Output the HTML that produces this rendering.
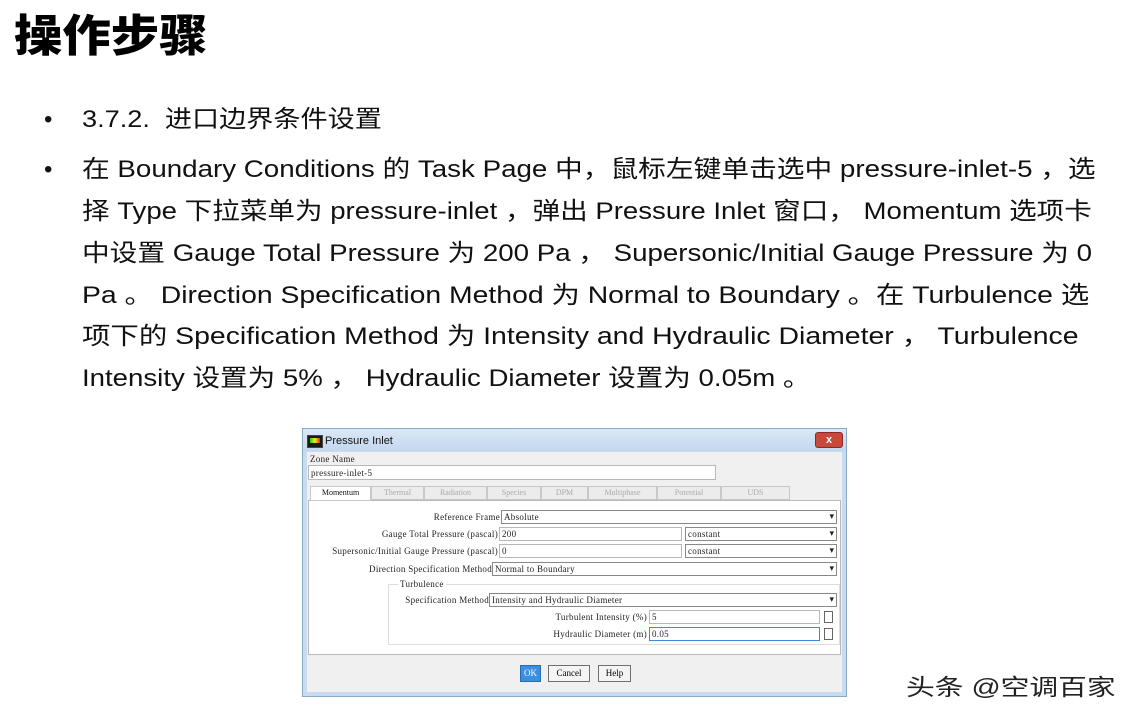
<!DOCTYPE html>
<html><head><meta charset="utf-8"><style>
body{margin:0;width:1135px;height:722px;background:#fff;position:relative;overflow:hidden;font-family:"Liberation Sans","Noto Sans CJK SC",sans-serif;}
.a{position:absolute;white-space:nowrap}
.t{font-size:24px;color:#111;line-height:30px;transform-origin:0 50%}
.m{font-family:"Liberation Serif","Noto Serif CJK SC",serif;font-size:9px;color:#222;line-height:12px;letter-spacing:0.3px}
.box{position:absolute;background:#fff;border:1px solid #b8b8b8;box-sizing:border-box}
.sel:after{content:"▾";position:absolute;right:2px;top:0;font-size:9px;color:#222}
.tab{position:absolute;top:486px;height:14px;border:1px solid #c8c8c8;box-sizing:border-box;background:#ececec;font-family:"Liberation Serif",serif;font-size:8px;color:#aaa;text-align:center;line-height:12px}
.btn{position:absolute;top:665px;height:17px;border:1px solid #707070;background:#f4f4f4;box-sizing:border-box;font-family:"Liberation Serif",serif;font-size:9px;text-align:center;line-height:15px}
</style></head><body>
<div class="a" style="left:14px;top:4px;font-size:44px;font-weight:900;font-family:'Noto Sans CJK SC',sans-serif;line-height:56px;transform:scaleX(1.1);transform-origin:0 50%">操作步骤</div>
<div class="a t" style="left:44px;top:105px">•</div>
<div class="a t" style="left:82px;top:105px;transform:scaleX(1.13)">3.7.2.&nbsp; 进口边界条件设置</div>
<div class="a t" style="left:44px;top:155px">•</div>
<div class="a t" style="left:82px;top:155px;transform:scaleX(1.155)">在 Boundary Conditions 的 Task Page 中，鼠标左键单击选中 pressure-inlet-5 ，选</div>
<div class="a t" style="left:82px;top:197px;transform:scaleX(1.149)">择 Type 下拉菜单为 pressure-inlet ，弹出 Pressure Inlet 窗口， Momentum 选项卡</div>
<div class="a t" style="left:82px;top:239px;transform:scaleX(1.153)">中设置 Gauge Total Pressure 为 200 Pa ， Supersonic/Initial Gauge Pressure 为 0</div>
<div class="a t" style="left:82px;top:281px;transform:scaleX(1.181)">Pa 。 Direction Specification Method 为 Normal to Boundary 。在 Turbulence 选</div>
<div class="a t" style="left:82px;top:322px;transform:scaleX(1.184)">项下的 Specification Method 为 Intensity and Hydraulic Diameter ， Turbulence</div>
<div class="a t" style="left:82px;top:364px;transform:scaleX(1.15)">Intensity 设置为 5% ， Hydraulic Diameter 设置为 0.05m 。</div>

<div style="position:absolute;left:302px;top:428px;width:545px;height:269px;background:#c9dcef;border:1px solid #8aa8c8;box-sizing:border-box"></div>
<div style="position:absolute;left:303px;top:429px;width:543px;height:22px;background:linear-gradient(#dbe8f6,#c3d7ee)"></div>
<div style="position:absolute;left:307px;top:435px;width:14px;height:11px;background:#1a1a1a;border:1px solid #444"><div style="margin:2px;height:5px;background:linear-gradient(90deg,#2c2,#ee2,#e22)"></div></div>
<div class="a" style="left:325px;top:435px;font-size:11px;color:#111">Pressure Inlet</div>
<div style="position:absolute;left:815px;top:432px;width:28px;height:16px;background:#c9483c;border:1px solid #8a2a22;border-radius:3px;box-sizing:border-box;color:#fff;font-size:11px;font-weight:bold;text-align:center;line-height:14px">x</div>
<div style="position:absolute;left:307px;top:452px;width:535px;height:240px;background:#f0f0f0"></div>
<div class="a m" style="left:310px;top:453px">Zone Name</div>
<div class="box" style="left:308px;top:465px;width:408px;height:15px"></div>
<div class="a m" style="left:311px;top:467px">pressure-inlet-5</div>
<div class="box" style="left:308px;top:500px;width:533px;height:155px;background:#fff"></div>
<div class="tab" style="left:310px;width:61px;background:#fff;color:#111;height:15px">Momentum</div>
<div class="tab" style="left:371px;width:53px">Thermal</div>
<div class="tab" style="left:424px;width:63px">Radiation</div>
<div class="tab" style="left:487px;width:54px">Species</div>
<div class="tab" style="left:541px;width:47px">DPM</div>
<div class="tab" style="left:588px;width:69px">Multiphase</div>
<div class="tab" style="left:657px;width:64px">Potential</div>
<div class="tab" style="left:721px;width:69px">UDS</div>

<div class="a m" style="right:635px;top:511px">Reference Frame</div>
<div class="box sel" style="left:501px;top:510px;width:336px;height:14px;border-color:#888"></div>
<div class="a m" style="left:504px;top:511px">Absolute</div>
<div class="a m" style="right:637px;top:528px">Gauge Total Pressure (pascal)</div>
<div class="box" style="left:499px;top:527px;width:183px;height:14px"></div>
<div class="a m" style="left:502px;top:528px">200</div>
<div class="box sel" style="left:685px;top:527px;width:152px;height:14px;border-color:#888"></div>
<div class="a m" style="left:688px;top:528px">constant</div>
<div class="a m" style="right:637px;top:545px">Supersonic/Initial Gauge Pressure (pascal)</div>
<div class="box" style="left:499px;top:544px;width:183px;height:14px"></div>
<div class="a m" style="left:502px;top:545px">0</div>
<div class="box sel" style="left:685px;top:544px;width:152px;height:14px;border-color:#888"></div>
<div class="a m" style="left:688px;top:545px">constant</div>
<div class="a m" style="right:643px;top:563px">Direction Specification Method</div>
<div class="box sel" style="left:492px;top:562px;width:345px;height:14px;border-color:#888"></div>
<div class="a m" style="left:495px;top:563px">Normal to Boundary</div>
<div class="box" style="left:388px;top:584px;width:452px;height:61px;border-color:#ddd"></div>
<div class="a m" style="left:398px;top:578px;background:#fff;padding:0 2px">Turbulence</div>
<div class="a m" style="right:646px;top:594px">Specification Method</div>
<div class="box sel" style="left:489px;top:593px;width:348px;height:14px;border-color:#888"></div>
<div class="a m" style="left:492px;top:594px">Intensity and Hydraulic Diameter</div>
<div class="a m" style="right:488px;top:611px">Turbulent Intensity (%)</div>
<div class="box" style="left:649px;top:610px;width:171px;height:14px"></div>
<div class="a m" style="left:652px;top:611px">5</div>
<div class="box" style="left:824px;top:611px;width:9px;height:12px;border-color:#666"></div>
<div class="a m" style="right:488px;top:628px">Hydraulic Diameter (m)</div>
<div class="box" style="left:649px;top:627px;width:171px;height:14px;border-color:#3c8ad8"></div>
<div class="a m" style="left:652px;top:628px">0.05</div>
<div class="box" style="left:824px;top:628px;width:9px;height:12px;border-color:#666"></div>

<div class="btn" style="left:520px;width:21px;background:#3c8fe0;border-color:#2a6cb0;color:#fff">OK</div>
<div class="btn" style="left:548px;width:42px">Cancel</div>
<div class="btn" style="left:598px;width:33px">Help</div>

<div class="a" style="left:906px;top:672px;font-size:23px;color:#222;line-height:30px;transform:scaleX(1.25);transform-origin:0 50%">头条 @空调百家</div>
</body></html>
